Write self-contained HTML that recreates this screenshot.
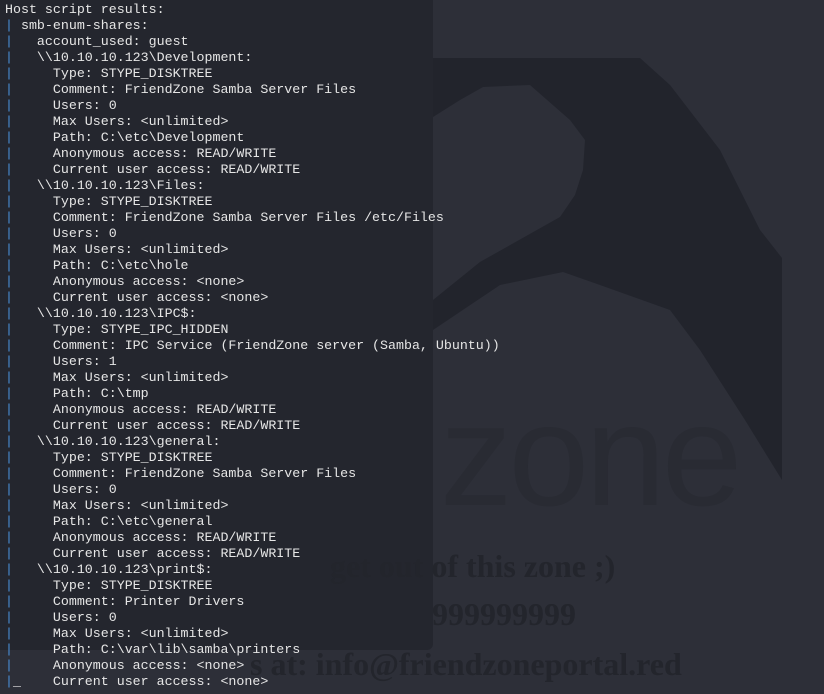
<!DOCTYPE html>
<html><head><meta charset="utf-8"><style>
html,body{margin:0;padding:0;width:824px;height:694px;overflow:hidden;background:#2d2f38;}
.panel{position:absolute;left:0;top:0;width:433px;height:650px;background:#24262e;border-radius:0 0 6px 0;}
svg{position:absolute;left:0;top:0;}
.bg{position:absolute;font-family:"Liberation Serif",serif;font-weight:bold;color:#23252c;font-size:32px;line-height:32px;white-space:nowrap;}
pre{position:absolute;left:5px;top:2px;margin:0;font-family:"Liberation Mono","DejaVu Sans Mono",monospace;font-size:13.3px;line-height:16px;color:#e6e6e6;white-space:pre;}
b{font-weight:normal;color:#4a8fd8;}
</style></head><body>
<svg width="824" height="694">
<polygon fill="#22242c" points="433,58 640,58 670,85 720,150 760,230 782,258 782,480 745,420 700,350 670,310 600,285 563,272 500,285 433,330 433,300 480,262 560,217 575,195 583,170 585,140 570,120 530,85 483,87 460,100 433,117" />
<text x="440" y="505" font-family="Liberation Sans,sans-serif" font-size="145" fill="#292b33" letter-spacing="-4">zone</text>
</svg>
<div class="panel"></div>
<div class="bg" style="left:330px;top:550px">get out of this zone ;)</div>
<div class="bg" style="left:432px;top:598px">999999999</div>
<div class="bg" style="left:250px;top:648px">s at: info@friendzoneportal.red</div>
<pre>Host script results:
<b>|</b> smb-enum-shares:
<b>|</b>   account_used: guest
<b>|</b>   \\10.10.10.123\Development:
<b>|</b>     Type: STYPE_DISKTREE
<b>|</b>     Comment: FriendZone Samba Server Files
<b>|</b>     Users: 0
<b>|</b>     Max Users: &lt;unlimited&gt;
<b>|</b>     Path: C:\etc\Development
<b>|</b>     Anonymous access: READ/WRITE
<b>|</b>     Current user access: READ/WRITE
<b>|</b>   \\10.10.10.123\Files:
<b>|</b>     Type: STYPE_DISKTREE
<b>|</b>     Comment: FriendZone Samba Server Files /etc/Files
<b>|</b>     Users: 0
<b>|</b>     Max Users: &lt;unlimited&gt;
<b>|</b>     Path: C:\etc\hole
<b>|</b>     Anonymous access: &lt;none&gt;
<b>|</b>     Current user access: &lt;none&gt;
<b>|</b>   \\10.10.10.123\IPC$:
<b>|</b>     Type: STYPE_IPC_HIDDEN
<b>|</b>     Comment: IPC Service (FriendZone server (Samba, Ubuntu))
<b>|</b>     Users: 1
<b>|</b>     Max Users: &lt;unlimited&gt;
<b>|</b>     Path: C:\tmp
<b>|</b>     Anonymous access: READ/WRITE
<b>|</b>     Current user access: READ/WRITE
<b>|</b>   \\10.10.10.123\general:
<b>|</b>     Type: STYPE_DISKTREE
<b>|</b>     Comment: FriendZone Samba Server Files
<b>|</b>     Users: 0
<b>|</b>     Max Users: &lt;unlimited&gt;
<b>|</b>     Path: C:\etc\general
<b>|</b>     Anonymous access: READ/WRITE
<b>|</b>     Current user access: READ/WRITE
<b>|</b>   \\10.10.10.123\print$:
<b>|</b>     Type: STYPE_DISKTREE
<b>|</b>     Comment: Printer Drivers
<b>|</b>     Users: 0
<b>|</b>     Max Users: &lt;unlimited&gt;
<b>|</b>     Path: C:\var\lib\samba\printers
<b>|</b>     Anonymous access: &lt;none&gt;
<b>|</b>_    Current user access: &lt;none&gt;</pre>
</body></html>
